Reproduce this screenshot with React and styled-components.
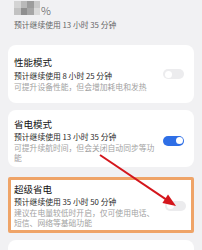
import React from 'react'
import styled, { createGlobalStyle } from 'styled-components'

const Global = createGlobalStyle`
  html, body {
    margin: 0;
    padding: 0;
    background: #f1f1f3;
  }
  body {
    width: 202px;
    height: 250px;
    overflow: hidden;
    font-family: "Noto Sans CJK SC", "Noto Sans", sans-serif;
  }
`

const Page = styled.div`
  position: relative;
  width: 202px;
  height: 250px;
  padding: 0 8px;
  box-sizing: border-box;
  overflow: hidden;
`

const Header = styled.div`
  padding-left: 6px;
  height: 45px;
`

const Level = styled.div`
  display: flex;
  align-items: flex-end;
  height: 16px;
`

const Mosaic = styled.div`
  display: grid;
  grid-template-columns: repeat(4, 6.5px);
  grid-template-rows: repeat(2, 7px);
  margin-bottom: 1px;
  filter: blur(0.6px);
`

const Cell = styled.div`
  background: ${p => p.c};
`

const Percent = styled.span`
  font-size: 11px;
  line-height: 11px;
  color: #555;
  font-weight: 300;
  margin-left: 1px;
`

const Estimate = styled.div`
  margin-top: 3px;
  font-size: 7.8px;
  line-height: 12px;
  color: #666;
  white-space: nowrap;
`

const Card = styled.div`
  display: flex;
  align-items: center;
  background: #fff;
  border-radius: 8px;
  padding: ${p => p.pad};
  margin-top: ${p => p.gap}px;
  box-sizing: border-box;
`

const Marked = styled(Card)`
  border: 3px solid #efa468;
  border-radius: 2px;
`

const Texts = styled.div`
  flex: 1;
  max-width: 144px;
`

const Title = styled.div`
  font-size: 9.5px;
  line-height: 13px;
  color: #141414;
  font-weight: 400;
`

const Sub = styled.div`
  font-size: 7.8px;
  line-height: ${p => p.lh || 12}px;
  color: #2a2a2a;
  white-space: nowrap;
`

const Desc = styled.div`
  font-size: 7.8px;
  line-height: 10px;
  color: #a2a2a2;
`

const Toggle = styled.div`
  margin-left: auto;
  margin-right: ${p => p.mr}px;
  width: 21px;
  height: 10px;
  border-radius: 5px;
  background: ${p => (p.on ? '#2f6fe6' : '#ececee')};
  position: relative;
  &::after {
    content: '';
    position: absolute;
    top: 1.5px;
    left: ${p => (p.on ? '12.5px' : '1.5px')};
    width: 7px;
    height: 7px;
    border-radius: 50%;
    background: #fff;
  }
`

const Arrow = styled.svg`
  position: absolute;
  left: 0;
  top: 0;
  pointer-events: none;
`

const shades = ['#d4d4d4', '#b9b9b9', '#9c9c9c', '#c9c9c9', '#c2c2c2', '#8f8f8f', '#a6a6a6', '#dadada']

export default function App() {
  return (
    <Page>
      <Global />
      <Header>
        <Level>
          <Mosaic>
            {shades.map((c, i) => (
              <Cell key={i} c={c} />
            ))}
          </Mosaic>
          <Percent>%</Percent>
        </Level>
        <Estimate>预计继续使用 13 小时 35 分钟</Estimate>
      </Header>

      <Card pad="11px 5px 11px 6px" gap={0}>
        <Texts>
          <Title>性能模式</Title>
          <Sub lh={13}>预计继续使用 8 小时 25 分钟</Sub>
          <Desc>可提升设备性能，但会增加耗电和发热</Desc>
        </Texts>
        <Toggle mr={5} />
      </Card>

      <Card pad="8px 5px 4px 6px" gap={7}>
        <Texts>
          <Title>省电模式</Title>
          <Sub>预计继续使用 13 小时 35 分钟</Sub>
          <Desc>可提升续航时间，但会关闭自动同步等功能</Desc>
        </Texts>
        <Toggle mr={5} on />
      </Card>

      <Marked pad="3px 2px 2px 3px" gap={10}>
        <Texts>
          <Title>超级省电</Title>
          <Sub>预计继续使用 35 小时 50 分钟</Sub>
          <Desc>建议在电量较低时开启，仅可使用电话、短信、网络等基础功能</Desc>
        </Texts>
        <Toggle mr={3} />
      </Marked>

      <Card pad="20px 6px" gap={7} />

      <Arrow width="202" height="250" viewBox="0 0 202 250">
        <line x1="100" y1="155" x2="166" y2="199.4" stroke="#d4161c" strokeWidth="2" />
        <polygon points="176,206 162.4,203 168,194.6" fill="#d4161c" />
      </Arrow>
    </Page>
  )
}
